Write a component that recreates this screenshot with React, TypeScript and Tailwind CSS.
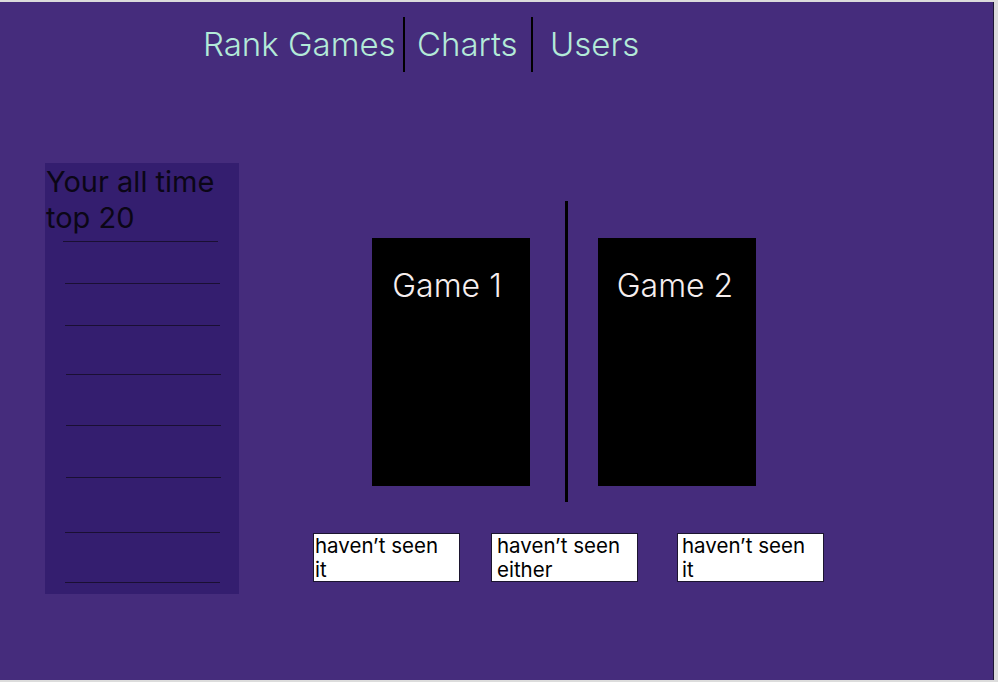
import React from 'react';

const lineOffsets = [
  { mt: 'mt-[5px]', ml: 'ml-[18px]' },
  { mt: 'mt-[41px]', ml: 'ml-[20px]' },
  { mt: 'mt-[41px]', ml: 'ml-[20px]' },
  { mt: 'mt-[48px]', ml: 'ml-[21px]' },
  { mt: 'mt-[50px]', ml: 'ml-[21px]' },
  { mt: 'mt-[51px]', ml: 'ml-[21px]' },
  { mt: 'mt-[54px]', ml: 'ml-[20px]' },
  { mt: 'mt-[49px]', ml: 'ml-[20px]' },
];

function Nav() {
  return (
    <div className="flex items-stretch pl-[203px] pt-[15px] h-[70px]">
      <a className="text-[33px] font-light leading-[55px] text-[#b3ead8] w-[200px]">Rank Games</a>
      <div className="w-[2px] bg-black" />
      <a className="text-[33px] font-light leading-[55px] text-[#b3ead8] pl-[12px] w-[126px]">Charts</a>
      <div className="w-[2px] bg-black" />
      <a className="text-[33px] font-light leading-[55px] text-[#b3ead8] pl-[17px]">Users</a>
    </div>
  );
}

function TopList() {
  return (
    <div className="w-[194px] h-[431px] bg-[#341e6f] shrink-0">
      <h2 className="text-[29px] leading-[36px] text-[#0b0616] pl-[1px] pt-[1px] font-normal">Your all time top 20</h2>
      {lineOffsets.map((l, i) => (
        <div key={i} className={`${l.mt} ${l.ml} w-[155px] h-[1px] bg-[#1a0f33]`} />
      ))}
    </div>
  );
}

function GameCard({ name, shift }: { name: string; shift: string }) {
  return (
    <div className="w-[158px] h-[248px] bg-black flex justify-center pt-[29px]">
      <span className={`text-[32px] font-light leading-[38px] text-[#f6eeee] ${shift}`}>{name}</span>
    </div>
  );
}

function ChoiceButton({ label, pad }: { label: string; pad: string }) {
  return (
    <button className={`w-[147px] h-[49px] bg-white border border-[#1c1530] text-left text-[20.5px] leading-[24px] text-black ${pad} pr-[12px] flex items-start`}>
      {label}
    </button>
  );
}

export default function App() {
  return (
    <div className="w-[998px] h-[682px] bg-[#dcdcdc] pt-[2px]" style={{ fontFamily: 'Inter, "Noto Sans", sans-serif' }}>
      <div className="w-[994px] h-[678px] bg-[#452c7c] border-r border-[#1d1535]">
        <Nav />
        <div className="flex mt-[91px] ml-[45px]">
          <TopList />
          <div className="ml-[74px] mt-[38px]">
            <div className="flex pl-[59px] h-[301px]">
              <div className="mt-[37px]"><GameCard name="Game 1" shift="-translate-x-[4px]" /></div>
              <div className="w-[3px] h-[301px] bg-black ml-[35px]" />
              <div className="mt-[37px] ml-[30px]"><GameCard name="Game 2" shift="-translate-x-[2px]" /></div>
            </div>
            <div className="flex mt-[31px]">
              <ChoiceButton label="haven’t seen it" pad="pl-[1px]" />
              <div className="ml-[31px]"><ChoiceButton label="haven’t seen either" pad="pl-[5px]" /></div>
              <div className="ml-[39px]"><ChoiceButton label="haven’t seen it" pad="pl-[4px]" /></div>
            </div>
          </div>
        </div>
      </div>
    </div>
  );
}
